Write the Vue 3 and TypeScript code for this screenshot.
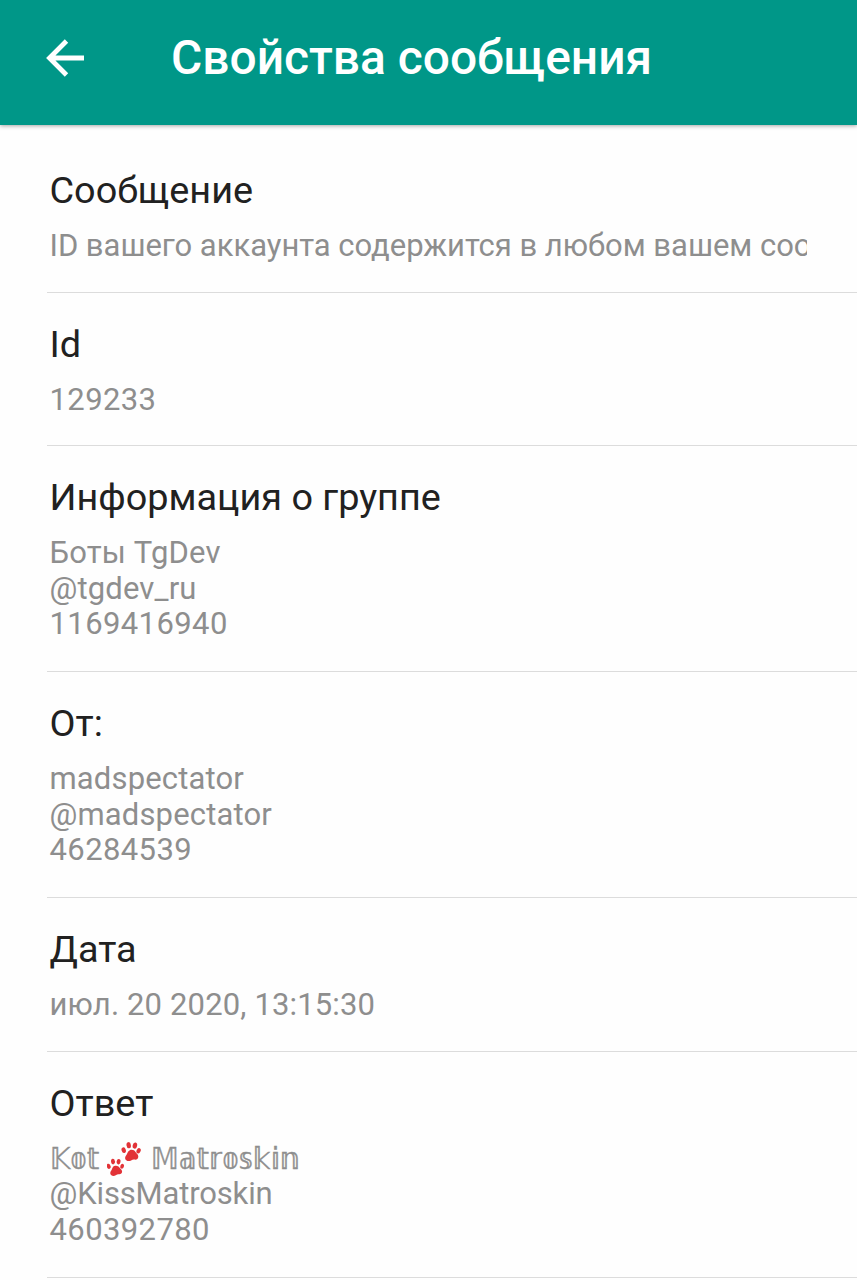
<script setup lang="ts">
interface Line {
  text: string
  kind?: 'number' | 'message'
}

interface Property {
  title: string
  lines: Line[]
}

const properties: Property[] = [
  { title: 'Сообщение', lines: [{ text: 'ID вашего аккаунта содержится в любом вашем соо', kind: 'message' }] },
  { title: 'Id', lines: [{ text: '129233', kind: 'number' }] },
  {
    title: 'Информация о группе',
    lines: [{ text: 'Боты TgDev' }, { text: '@tgdev_ru' }, { text: '1169416940', kind: 'number' }],
  },
  {
    title: 'От:',
    lines: [{ text: 'madspectator' }, { text: '@madspectator' }, { text: '46284539', kind: 'number' }],
  },
  { title: 'Дата', lines: [{ text: 'июл. 20 2020, 13:15:30' }] },
]
</script>

<template>
  <div class="screen">
    <header class="bar">
      <svg class="back" viewBox="0 0 40 40" fill="none" stroke="#fff" stroke-width="4.8">
        <path d="M39 20H5M21.500 3 4.500 20l17 17" />
      </svg>
      <h1>Свойства сообщения</h1>
    </header>
    <main class="list">
      <section v-for="item in properties" :key="item.title" class="item" :class="{ multi: item.lines.length > 1 }">
        <h2>{{ item.title }}</h2>
        <p v-for="line in item.lines" :key="line.text" :class="line.kind">{{ line.text }}</p>
      </section>
      <section class="item multi">
        <h2>Ответ</h2>
        <p class="name">
          <span class="struck kot">𝕂𝕠𝕥</span>
          <svg class="paws" viewBox="0 0 34 36" fill="#e23237">
            <g id="paw">
              <path d="M22.800 9.200c2.500-.9 4.700.1 5.700 1.900.8 1.400 2.900 2.200 2.800 4.600-.1 2.200-1.800 3.200-3.700 2.900-1.400-.2-2.300.2-3.500.9-2.300 1.300-5.800.5-6-2.200-.1-1.900 1.200-2.800 1.900-4.300.6-1.400 1.300-3.200 2.800-3.800Z" />
              <ellipse cx="16.700" cy="9.200" rx="2.100" ry="2.900" transform="rotate(-18 16.700 9.200)" />
              <ellipse cx="21.700" cy="4.200" rx="2.200" ry="3.100" transform="rotate(-8 21.700 4.200)" />
              <ellipse cx="27.900" cy="4.600" rx="2.200" ry="3.100" transform="rotate(14 27.900 4.600)" />
              <ellipse cx="31.600" cy="9.800" rx="2" ry="2.800" transform="rotate(24 31.600 9.800)" />
            </g>
            <use href="#paw" transform="matrix(.9 -.04 .04 .9 -13.700 17.700)" />
          </svg>
          <span class="struck">𝕄𝕒𝕥𝕣𝕠𝕤𝕜𝕚𝕟</span>
        </p>
        <p class="handle">@KissMatroskin</p>
        <p class="number">460392780</p>
      </section>
    </main>
  </div>
</template>

<style>
body {
  margin: 0;
  background: #fff;
}
</style>

<style scoped>
.screen {
  height: 1280px;
  overflow: hidden;
  background: #fefefe;
  font-family: Roboto, "Liberation Sans", sans-serif;
}
.bar {
  box-sizing: border-box;
  height: 125px;
  padding: 0 0 9px 45px;
  display: flex;
  align-items: center;
  background: #009788;
  box-shadow: 0 1px 4px rgba(0, 0, 0, 0.35);
}
.back {
  width: 40px;
  height: 40px;
  margin-right: 86px;
}
h1 {
  margin: 0;
  font-size: 47.900px;
  font-weight: 500;
  line-height: 56px;
  color: #fff;
  white-space: nowrap;
}
.list {
  padding: 14px 0 0 47px;
}
.item {
  box-sizing: border-box;
  height: 153.500px;
  padding: 29px 50px 0 2.500px;
  border-bottom: 1px solid #dcdcdc;
}
.multi {
  height: 226px;
}
h2 {
  margin: 0 0 16px;
  font-size: 37.800px;
  font-weight: 400;
  line-height: 44px;
  color: #212121;
}
p {
  margin: 0;
  height: 35.600px;
  font-size: 31px;
  line-height: 35.600px;
  letter-spacing: 0.150px;
  color: #8e8e8e;
  white-space: nowrap;
}
.message {
  overflow: hidden;
  letter-spacing: -0.030px;
}
.number {
  letter-spacing: 0.400px;
}
.handle {
  letter-spacing: -0.150px;
}
.name {
  display: flex;
}
.struck {
  font-family: "DejaVu Sans", sans-serif;
  font-size: 30px;
  letter-spacing: 0;
  transform: scaleX(0.9);
  transform-origin: 0 50%;
  -webkit-text-stroke: 0.400px #8e8e8e;
}
.kot {
  width: 57.500px;
}
.paws {
  width: 34px;
  height: 36px;
  margin-right: 10px;
}
</style>
